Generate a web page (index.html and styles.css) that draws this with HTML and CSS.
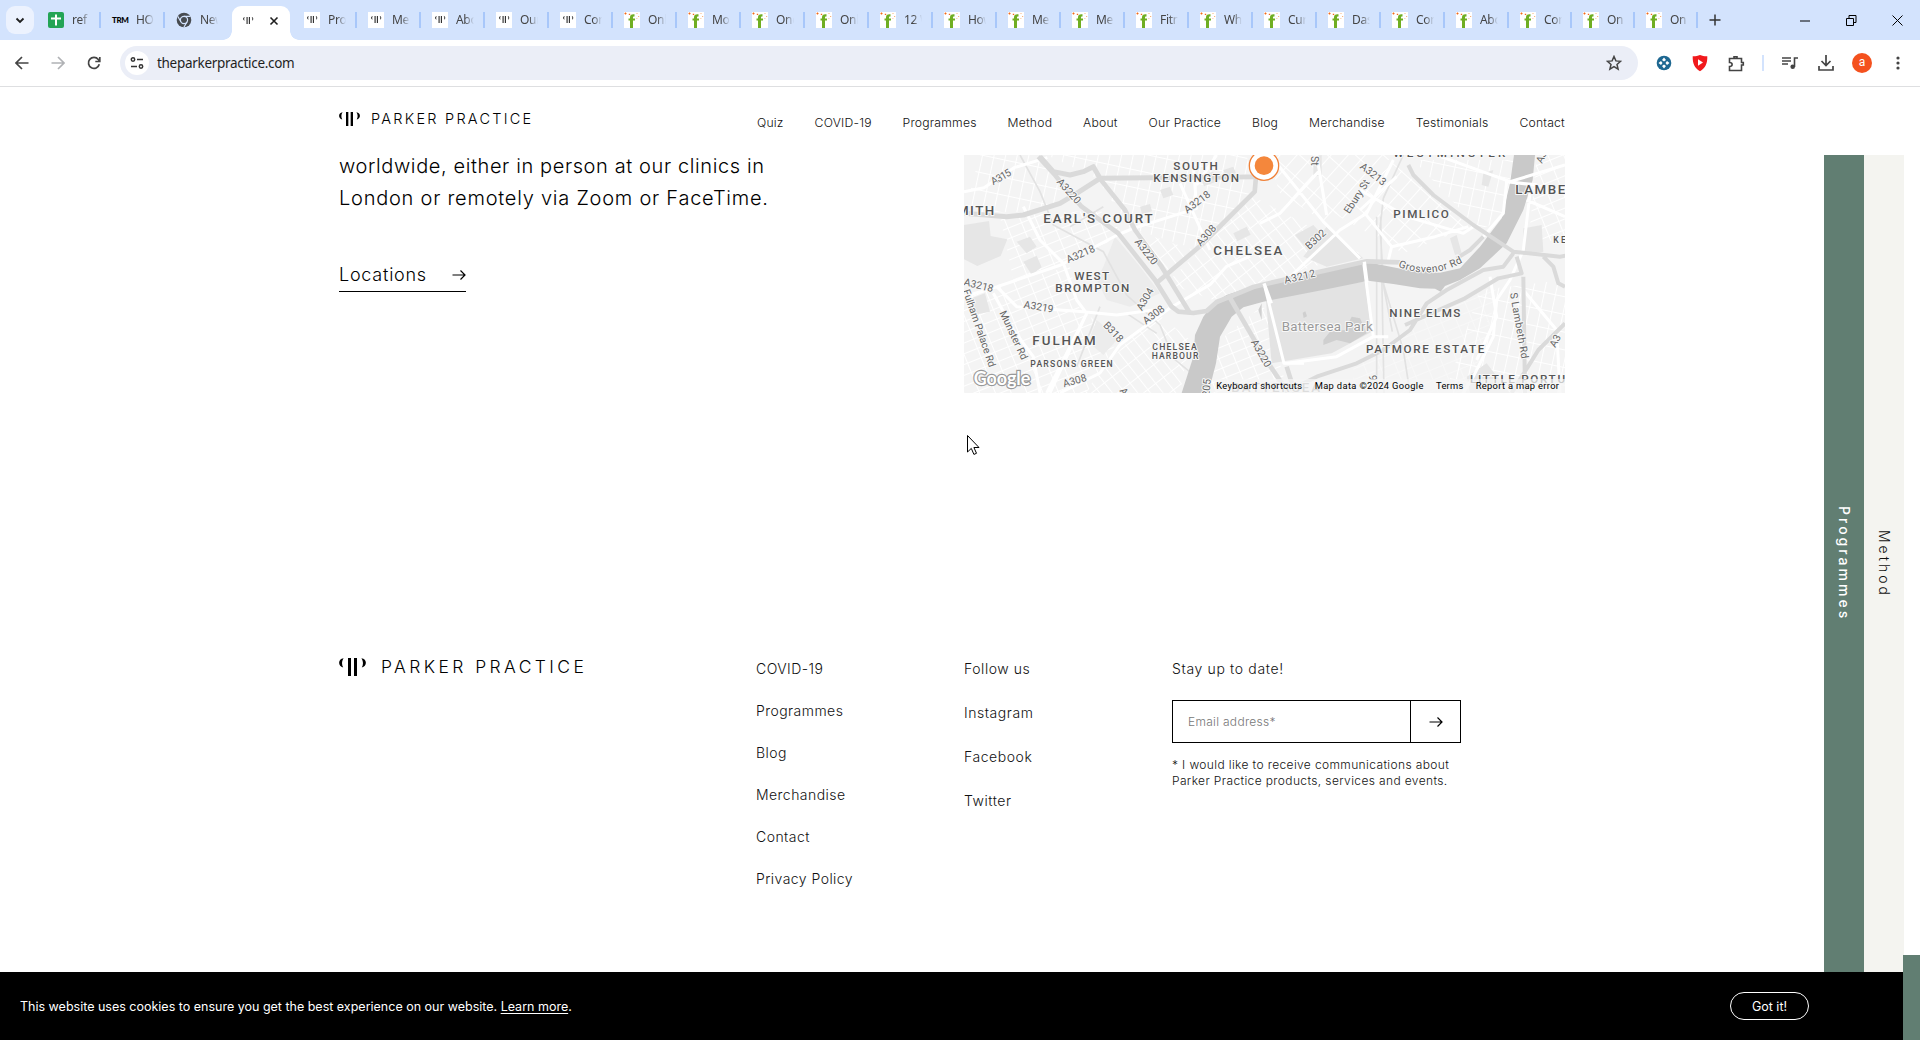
FILE: index.html
```html
<!DOCTYPE html>
<html lang="en">
<head>
<meta charset="utf-8">
<title>Parker Practice</title>
<link rel="stylesheet" href="styles.css">
</head>
<body>
<svg class="defs" aria-hidden="true">
  <symbol id="pp" viewBox="0 0 27 18"><path d="M4.6.2C-1.300 1-1.300 8 4.200 9.600 2.500 6.500 2.700 3 4.600.2zM22.400.2C28.300 1 28.300 8 22.800 9.600 24.500 6.500 24.300 3 22.400.2zM9 0h3v18H9zM15 0h3v18h-3z"/></symbol>
  <symbol id="fav-pp" viewBox="0 0 16 16"><rect width="16" height="16" fill="#fff"/><use href="#pp" x="3" y="4" width="10.500" height="7" fill="#333"/></symbol>
  <symbol id="fav-f" viewBox="0 0 16 16"><rect width="16" height="16" fill="#fff"/><path d="M6 16V8.600H4.500V6.400H6V5.300C6 3 7.400 2 10.500 2.300v2.200C9.300 4.300 9 4.700 9 5.600v.8h2v2.200H9V16z" fill="#6fae22"/><path d="M.5 1.500h2M1.500.5v2M4.800 2.300h1.400" stroke="#f26a1b" stroke-width="1.200"/><path d="M12.500 1.500h1M14 4.500h1.200M12.500 6.500h.8" stroke="#f9b27c"/></symbol>
  <symbol id="arrow" viewBox="0 0 14 12"><path d="M.5 6H13M8.500 1.500L13 6l-4.500 4.500" fill="none" stroke="#000" stroke-width="1.200"/></symbol>
</svg>

<div class="tabs">
  <div class="tab-search"><svg width="10" height="10" viewBox="0 0 10 10"><path d="M1.500 3.500L5 7l3.500-3.500" fill="none" stroke="#1f1f1f" stroke-width="1.800"/></svg></div>
  <div class="tab"><svg class="fav" viewBox="0 0 16 16"><rect width="16" height="16" rx="2" fill="#23a455"/><path d="M8 2.500v11M3 6.500h10" stroke="#fff" stroke-width="2"/></svg><span>ref</span></div>
  <div class="tab"><b class="fav trm">TRM</b><span>HO</span></div>
  <div class="tab last-before"><svg class="fav" viewBox="0 0 16 16"><circle cx="8" cy="8" r="7.300" fill="#474b50"/><circle cx="8" cy="8" r="3.600" fill="#474b50" stroke="#d3e3fd" stroke-width="1.200"/><path d="M8 4.400h6.500M4.900 9.800L1.700 4.200M11.100 9.800l-3.200 5.500" stroke="#d3e3fd" stroke-width="1.200"/></svg><span>New</span></div>
  <div class="tab active"><svg class="fav"><use href="#fav-pp"/></svg><svg class="close" width="10" height="10" viewBox="0 0 10 10"><path d="M1.500 1.500l7 7M8.500 1.500l-7 7" stroke="#1f1f1f" stroke-width="1.600"/></svg></div>
  <div class="tab"><svg class="fav"><use href="#fav-pp"/></svg><span>Pro</span></div>
  <div class="tab"><svg class="fav"><use href="#fav-pp"/></svg><span>Me</span></div>
  <div class="tab"><svg class="fav"><use href="#fav-pp"/></svg><span>Abo</span></div>
  <div class="tab"><svg class="fav"><use href="#fav-pp"/></svg><span>Our</span></div>
  <div class="tab"><svg class="fav"><use href="#fav-pp"/></svg><span>Con</span></div>
  <div class="tab"><svg class="fav"><use href="#fav-f"/></svg><span>Onl</span></div>
  <div class="tab"><svg class="fav"><use href="#fav-f"/></svg><span>Mo</span></div>
  <div class="tab"><svg class="fav"><use href="#fav-f"/></svg><span>One</span></div>
  <div class="tab"><svg class="fav"><use href="#fav-f"/></svg><span>Onl</span></div>
  <div class="tab"><svg class="fav"><use href="#fav-f"/></svg><span>12 W</span></div>
  <div class="tab"><svg class="fav"><use href="#fav-f"/></svg><span>How</span></div>
  <div class="tab"><svg class="fav"><use href="#fav-f"/></svg><span>Me</span></div>
  <div class="tab"><svg class="fav"><use href="#fav-f"/></svg><span>Me</span></div>
  <div class="tab"><svg class="fav"><use href="#fav-f"/></svg><span>Fitn</span></div>
  <div class="tab"><svg class="fav"><use href="#fav-f"/></svg><span>Wh</span></div>
  <div class="tab"><svg class="fav"><use href="#fav-f"/></svg><span>Cur</span></div>
  <div class="tab"><svg class="fav"><use href="#fav-f"/></svg><span>Das</span></div>
  <div class="tab"><svg class="fav"><use href="#fav-f"/></svg><span>Con</span></div>
  <div class="tab"><svg class="fav"><use href="#fav-f"/></svg><span>Abo</span></div>
  <div class="tab narrow"><svg class="fav"><use href="#fav-f"/></svg><span>Con</span></div>
  <div class="tab narrow"><svg class="fav"><use href="#fav-f"/></svg><span>On</span></div>
  <div class="tab narrow"><svg class="fav"><use href="#fav-f"/></svg><span>On</span></div>
  <svg class="plus" width="12" height="12" viewBox="0 0 12 12"><path d="M6 .5v11M.5 6h11" stroke="#333" stroke-width="1.500"/></svg>
  <div class="window-buttons">
    <svg width="11" height="11" viewBox="0 0 11 11"><path d="M0 6h10" stroke="#000"/></svg>
    <svg width="11" height="11" viewBox="0 0 11 11"><path d="M.5 3.500h7v7h-7zM3 3.500V.5h7v7H7.500" fill="none" stroke="#000"/></svg>
    <svg width="11" height="11" viewBox="0 0 11 11"><path d="M.5.5l10 10M10.500.5l-10 10" stroke="#000"/></svg>
  </div>
</div>

<div class="toolbar">
  <div class="nav-buttons">
    <svg width="14" height="14" viewBox="0 0 14 14"><path d="M13.500 7H1.500M7 1L1 7l6 6" fill="none" stroke="#444" stroke-width="1.700"/></svg>
    <svg width="14" height="14" viewBox="0 0 14 14"><path d="M.5 7h12M7 1l6 6-6 6" fill="none" stroke="#b0b2b5" stroke-width="1.700"/></svg>
    <svg width="14" height="14" viewBox="0 0 14 14"><path d="M12.300 8.300A5.500 5.500 0 1 1 11.300 3.500L12.500 5M12.800 1v4.500H8.300" fill="none" stroke="#444" stroke-width="1.700"/></svg>
  </div>
  <div class="omnibox">
    <div class="site-info"><svg width="14" height="12" viewBox="0 0 14 12"><path d="M7 2.500h6M1 9.500h6" stroke="#333" stroke-width="1.600"/><circle cx="3" cy="2.500" r="1.700" fill="none" stroke="#333" stroke-width="1.500"/><circle cx="11" cy="9.500" r="1.700" fill="none" stroke="#333" stroke-width="1.500"/></svg></div>
    <span class="url">theparkerpractice.com</span>
    <svg class="star" width="16" height="16" viewBox="0 0 16 16"><path d="M8 1.500l1.900 4.400 4.700.4-3.600 3.100 1.100 4.700L8 11.600l-4.100 2.500L5 9.400 1.400 6.300l4.700-.4z" fill="none" stroke="#444" stroke-width="1.500"/></svg>
  </div>
  <div class="extensions">
    <svg width="16" height="16" viewBox="0 0 16 16"><circle cx="8" cy="8" r="7.300" fill="#1d6791"/><path d="M8 2.500l2 2.500-2 1.500L6 5zM8 13.500L6 11l2-1.500 2 1.500zM2.500 8L5 6l1.500 2L5 10zM13.500 8L11 10 9.500 8 11 6z" fill="#fff"/></svg>
    <svg width="16" height="18" viewBox="0 0 16 18"><path d="M8 1c2.500 1 4.500 1.400 7.300 1.300C15.500 9.500 13.500 14 8 17.200 2.500 14 .5 9.500.7 2.300 3.500 2.400 5.500 2 8 1z" fill="#f11a1d"/><path d="M6 5.300l5 3.200-5 3.200z" fill="#fff"/></svg>
    <svg width="17" height="17" viewBox="0 0 17 17"><path d="M1.500 3.500h12v4h1.800v2.500h-1.800v5.500h-12v-4c3.500 0 3.500-4 0-4zM6 3.500V1.700h3v1.800" fill="none" stroke="#444" stroke-width="1.600"/></svg>
    <i></i>
    <svg width="16" height="14" viewBox="0 0 16 14"><path d="M0 2h9M0 5h9M0 8h6M12.500 11V2H16" fill="none" stroke="#444" stroke-width="1.600"/><circle cx="10.700" cy="10.700" r="2.300" fill="#444"/></svg>
    <svg width="16" height="16" viewBox="0 0 16 16"><path d="M8 0v10M3.500 6L8 10.500 12.500 6M1 11v4h14v-4" fill="none" stroke="#444" stroke-width="1.700"/></svg>
    <div class="avatar">a</div>
    <svg width="4" height="16" viewBox="0 0 4 16" fill="#444"><circle cx="2" cy="3" r="1.600"/><circle cx="2" cy="8" r="1.600"/><circle cx="2" cy="13" r="1.600"/></svg>
  </div>
</div>

<div class="page">
  <div class="main">
    <header class="site-header">
      <a class="logo"><svg width="21" height="14"><use href="#pp"/></svg><span>PARKER PRACTICE</span></a>
      <nav>
        <a>Quiz</a><a>COVID-19</a><a>Programmes</a><a>Method</a><a>About</a><a>Our Practice</a><a>Blog</a><a>Merchandise</a><a>Testimonials</a><a>Contact</a>
      </nav>
    </header>

    <div class="body-row">
      <div class="content">
        <section class="clinics">
          <div class="intro">
            <p><span class="first">worldwide, either in person at our clinics in</span><br>London or remotely via Zoom or FaceTime.</p>
            <a class="locations"><span>Locations</span><svg width="14" height="12"><use href="#arrow"/></svg></a>
          </div>
          <svg class="map" width="601" height="238" viewBox="12 15 1803 714">
            <defs>
              <pattern id="g1" width="44" height="30" patternUnits="userSpaceOnUse" patternTransform="rotate(-22)"><path d="M0 0h44M0 0v30" stroke="#fff" stroke-width="6"/></pattern>
              <pattern id="g2" width="34" height="52" patternUnits="userSpaceOnUse" patternTransform="rotate(12)"><path d="M0 0h34M0 0v52" stroke="#fff" stroke-width="6"/></pattern>
              <pattern id="g3" width="38" height="56" patternUnits="userSpaceOnUse" patternTransform="rotate(42)"><path d="M0 0h38M0 0v56" stroke="#fff" stroke-width="6"/></pattern>
              <pattern id="g4" width="30" height="48" patternUnits="userSpaceOnUse" patternTransform="rotate(-38)"><path d="M0 0h30M0 0v48" stroke="#fff" stroke-width="6"/></pattern>
            </defs>
            <rect x="12" y="15" width="1803" height="714" fill="#f4f4f4"/>
            <g>
              <path d="M12 430L330 350 360 480 480 560 380 729H12z" fill="url(#g1)"/>
              <path d="M60 15h170l90 130-100 40L12 190z" fill="url(#g2)"/>
              <path d="M120 200l300-20 60 60-60 60-260 90z" fill="url(#g1)"/>
              <path d="M260 15h600l20 110-180 170-190-60-100-150z" fill="url(#g2)"/>
              <path d="M520 240l180 60-90 90zM620 400l260-260 320 170-280 80-160 60z" fill="url(#g4)"/>
              <path d="M370 729l110-130 110-110 100 80-30 159z" fill="url(#g4)"/>
              <path d="M780 570l130-105 75 264H740z" fill="url(#g1)"/>
              <path d="M920 15h380L1100 220 960 130z" fill="url(#g3)"/>
              <path d="M1120 190l180-150 230 190-200 80z" fill="url(#g3)"/>
              <path d="M1360 30h300l-20 170-80 40z" fill="url(#g2)"/>
              <path d="M1560 420l255-30v339h-360z" fill="url(#g2)"/>
              <path d="M1730 15h85v250l-110 20z" fill="url(#g1)"/>
              <path d="M1180 650l230-160 200-80-60 319h-370z" fill="url(#g1)" opacity=".35"/>
            </g>
            <g fill="#e6e6e6">
              <path d="M12 225l75-12 5 45 50 10-20 50-70 30-40-20zM170 275l40-15 20 30-30 20zM190 335l40-18 15 35-30 22zM35 445l40-15 15 55-50 10z"/>
              <path d="M465 260l75 90 60 80-90 40-70-20-30-60 20-40zM410 510l65 55-45 50-45-40z" fill="#ececec"/>
              <path d="M600 120l30-10 10 25-30 10zM720 75l40-10 8 30-36 14zM540 170l30-8 6 22-30 8zM820 250l40-20 12 24-40 20zM790 60l30-10 8 20-30 10z"/>
              <path d="M1005 255l55-30 50 55-50 40zM1100 230l110 95-110 25-70-30 30-40z"/>
              <path d="M915 420l300-25 20 150-120 65-180 30z" fill="#e3e3e3"/>
              <path d="M1690 235l55-10 5 80-60 10zM1520 680l60-40 70 89h-120zM1470 265l20-10 15 55-20 5zM1570 70l30-10-15 50-20-5zM1060 20l25-5v60l-25 5z"/>
            </g>
            <g fill="#cfcfcf"><path d="M1090 570l20-25 45-5 20-40 25 5 20 45-50 30-40-10-40 15zM1028 488l8-4 5 15-10 5z"/></g>
            <g fill="none" stroke="#e2e2e2" stroke-width="5">
              <path d="M180 15l60 110 40 100 150 80 70 130 100 90 40 100 110 90M1250 200V729M1262 200l10 529M1330 15l-60 130-10 90 12 180 25 130M330 230l100-60M500 490l90 60M1270 400l60 200 20 129M350 650l70-180"/>
            </g>
            <path d="M665 729L700 620 705 555 730 500 760 460 800 435 860 415 912 400 1100 358 1215 335 1330 358 1440 368 1500 355 1560 290 1625 205 1650 100 1662 15h63L1718 90 1690 180 1640 280 1560 355 1500 390 1455 408 1442 425 1425 416 1380 415 1300 402 1225 392 1100 418 910 455 850 472 815 500 780 560 768 640 745 729z" fill="#c9c9c9"/>
            <path d="M895 480l10-20v50z" fill="#cfcfcf"/>
            <g fill="none" stroke="#fff" stroke-width="9" stroke-linejoin="round">
              <path d="M12 125l60-12 90-60 100-30M12 440l100-30 190-65 170-90 60-25M110 410l60 60 200 15 100 10 110-15M190 170l50 100 70 70 40 110 30 40-110 239M100 430l60 110 60 80 20 109M380 490L260 729M300 729l120-60 60-85 150-110 120-70 50-55 70-30M520 235l190-60-10-130M660 100l90 200M770 15l-60 90"/>
              <path d="M930 15l160 200 110 110M1070 15l30 180M1300 30l-80 160-80 50-160 150M1080 60L960 190l-60 30M1200 180l110-100M1200 120l140 80 170 50 30-20M1215 190l80 100 130-30 100-30M1295 290l-10 40M912 400l60 240 60 0M1210 330l30 230h45M980 640l150-20 110-60M1430 15l220 80 165-50M1640 95l-10 95-60 70M1700 150l115 50M1710 130l-20 170-40 90-40 60-10 110-60 120-50 80M1590 380l20 120-60 130M1690 420l100 120 10 189"/>
            </g>
            <g fill="none" stroke="#dadada" stroke-width="14" stroke-linejoin="round">
              <path d="M240 20l40 45 50 10 40-10 30-15 20 35 460-5 55-25M420 85l-70 45-50 30-110 35-50 5L12 190" stroke-width="15"/>
              <path d="M235 20l50 55 20 25 60 70 110 80 110 140 50 80 20 15 45 4 40-6 30-27 50-20 60-25 50-12 290-65 100 3"/>
              <path d="M415 80l80 100 30 60 80 110 85 140M890 60l-6 65-160 160-130 110M805 435l110 190 70 104M980 650l25 79"/>
              <path d="M1345 45l15 30 60 60 120 90 120 80 140 15 115-20M1570 260l-40 40-40 25M1660 310l-30 40-60 10-110 60-60 40-50 80-80 60-80 40-120 40-80 40M1670 320l15 50-70 15-100 60-180 80M1690 380l5 349M1815 520l-80 80-80 129M1750 320l30 30 15 50 20 10" stroke-width="12"/>
            </g>
            <path d="M912 400l22 60M1213 335l8 62M1640 95l90 10" stroke="#fff" stroke-width="10"/>
            <g class="lbl">
              <g font-size="40" font-weight="500">
                <text x="-38" y="194" textLength="141">SMITH</text><text x="250" y="219" textLength="328">EARL'S COURT</text><text x="760" y="315" textLength="207">CHELSEA</text><text x="217" y="585" textLength="190">FULHAM</text><text x="1666" y="132" textLength="212">LAMBETH</text>
              </g>
              <g font-size="35" font-weight="500">
                <text x="640" y="60" textLength="133">SOUTH</text><text x="580" y="96" textLength="257">KENSINGTON</text><text x="343" y="390" textLength="104">WEST</text><text x="286" y="426" textLength="222">BROMPTON</text><text x="1300" y="205" textLength="166">PIMLICO</text><text x="1288" y="501" textLength="213">NINE ELMS</text><text x="1218" y="609" textLength="355">PATMORE ESTATE</text><text x="1300" y="20" textLength="336">WESTMINSTER</text><text x="1530" y="699" textLength="366">LITTLE PORTUGAL</text>
              </g>
              <g font-size="26" font-weight="500">
                <text x="577" y="599" textLength="133">CHELSEA</text><text x="575" y="626" textLength="140">HARBOUR</text><text x="211" y="651" textLength="247">PARSONS GREEN</text><text x="1780" y="278" textLength="88">KENN</text>
              </g>
              <g font-size="31" class="road">
                <text transform="translate(100 106) rotate(-30)" textLength="65">A315</text><text transform="translate(289 97) rotate(48)">A3220</text><text transform="translate(682 191) rotate(-37)">A3218</text><text transform="translate(722 290) rotate(-48)">A308</text><text transform="translate(523 276) rotate(52)">A3220</text><text transform="translate(325 340) rotate(-24)">A3218</text><text transform="translate(10 405) rotate(14)">A3218</text><text transform="translate(190 473) rotate(10)">A3219</text><text transform="translate(546 484) rotate(-60)">A304</text><text transform="translate(558 524) rotate(-37)">A308</text><text transform="translate(428 527) rotate(47)">B318</text><text transform="translate(312 712) rotate(-16)">A308</text><text transform="translate(872 576) rotate(60)">A3220</text><text transform="translate(975 401) rotate(-13)" textLength="95">A3212</text><text transform="translate(1048 300) rotate(-43)">B302</text><text transform="translate(1198 53) rotate(38)">A3213</text><text transform="translate(1168 193) rotate(-57)">Ebury St</text><text transform="translate(1052 18) rotate(90)">St</text><text transform="translate(1746 42) rotate(-65)">A3</text><text transform="translate(1786 594) rotate(-62)">A3</text><text transform="translate(118 488) rotate(65)">Munster Rd</text><text transform="translate(8 422) rotate(71)" textLength="245">Fulham Palace Rd</text><text transform="translate(1650 430) rotate(80)" textLength="200">S Lambeth Rd</text><text transform="translate(1252 692) rotate(-90)">6</text><text transform="translate(748 740) rotate(-85)">205</text><text transform="translate(478 722) rotate(55)">A3</text>
                <path id="gros" d="M1314 350q100 42 204-18" fill="none" stroke="none"/><text><textPath href="#gros" textLength="202">Grosvenor Rd</textPath></text>
              </g>
              <text x="965" y="543" font-size="40" class="park" textLength="273">Battersea Park</text>
              <text x="814" y="727" font-size="40" font-weight="500" class="park" textLength="266">BATTERSEA</text>
            </g>
            <circle cx="912" cy="47" r="44" fill="#fff" stroke="#f08138" stroke-width="4"/><circle cx="912" cy="47" r="28" fill="#f4873c"/>
            <rect x="765" y="687" width="1050" height="42" fill="#f5f5f5" opacity=".72"/>
            <text x="41" y="704" font-family="Lato" font-weight="700" font-size="54" fill="#fff" stroke="#999" stroke-width="7" paint-order="stroke" textLength="170">Google</text>
            <g font-family="Roboto" font-size="28" font-weight="400" fill="#000"><text x="769" y="717" textLength="257">Keyboard shortcuts</text><text x="1064" y="717" textLength="326">Map data ©2024 Google</text><text x="1428" y="717" textLength="82">Terms</text><text x="1547" y="717" textLength="250">Report a map error</text></g>
          </svg>
        </section>

        <footer class="site-footer">
          <a class="logo big"><svg width="27" height="18"><use href="#pp"/></svg><span>PARKER PRACTICE</span></a>
          <ul class="links"><li>COVID-19</li><li>Programmes</li><li>Blog</li><li>Merchandise</li><li>Contact</li><li>Privacy Policy</li></ul>
          <ul class="links social"><li>Follow us</li><li>Instagram</li><li>Facebook</li><li>Twitter</li></ul>
          <div class="newsletter">
            <div class="title">Stay up to date!</div>
            <div class="field"><span>Email address*</span><div class="send"><svg width="14" height="12"><use href="#arrow"/></svg></div></div>
            <p>* I would like to receive communications about<br>Parker Practice products, services and events.</p>
          </div>
        </footer>
      </div>
      <aside class="side programmes"><span>Programmes</span></aside>
      <aside class="side method"><span>Method</span></aside>
    </div>

    <div class="cookies">
      <p>This website uses cookies to ensure you get the best experience on our website. <u>Learn more</u>.</p>
      <button>Got it!</button>
    </div>
  </div>
  <div class="scrollbar"><div class="thumb"></div></div>
</div>

<svg class="cursor" width="13" height="21" viewBox="0 0 13 21"><path d="M.5.500V17l3.800-3.600 2.600 6 2.600-1.100-2.600-5.800H12z" fill="#fff" stroke="#000"/></svg>
</body>
</html>
```
FILE: styles.css
```css
* { box-sizing: border-box; }
body { margin: 0; width: 1920px; height: 1040px; overflow: hidden; display: flex; flex-direction: column; background: #fff; color: #111; font-family: Inter, "Liberation Sans", sans-serif; font-weight: 300; }
svg { display: block; flex: none; }
.defs { position: absolute; width: 0; height: 0; }
p, ul { margin: 0; padding: 0; list-style: none; }

/* Browser tab strip */
.tabs { height: 40px; flex: none; display: flex; align-items: center; background: #d3e3fd; font: 400 12px "Noto Sans", sans-serif; color: #444; padding-left: 6px; }
.tab-search { width: 28px; height: 28px; margin-right: 3px; border-radius: 9px; background: #ecf2fe; display: flex; align-items: center; justify-content: center; }
.tab { width: 64px; height: 16px; padding-left: 11px; border-right: 2px solid #a8c7fa; display: flex; align-items: center; gap: 8px; flex: none; }
.tab span { width: 18px; overflow: hidden; white-space: nowrap; letter-spacing: -.3px; line-height: 16px; mask-image: linear-gradient(90deg, #000 50%, transparent); }
.fav { width: 16px; height: 16px; }
.trm { font: 900 8px/16px Lato, sans-serif; color: #000; letter-spacing: -.4px; }
.last-before { border-color: transparent; }
.tab.active { height: 34px; margin: 6px 3px 0 3px; width: 58px; padding: 0 0 4px 8px; border: 0; background: #fff; border-radius: 9px 9px 0 0; gap: 13px; position: relative; }
.active::before, .active::after { content: ""; position: absolute; bottom: 0; width: 9px; height: 9px; }
.active::before { left: -9px; background: radial-gradient(circle at 0 0, transparent 8.5px, #fff 9px); }
.active::after { right: -9px; background: radial-gradient(circle at 100% 0, transparent 8.5px, #fff 9px); }
.narrow { width: 63px; }
.plus { margin-left: 11px; }
.window-buttons { margin-left: auto; padding-right: 17px; display: flex; gap: 35px; }

/* Browser toolbar */
.toolbar { height: 47px; flex: none; display: flex; align-items: center; padding-left: 15px; border-bottom: 1px solid #dedfe1; }
.nav-buttons { display: flex; gap: 22px; width: 105px; }
.omnibox { width: 1518px; height: 34px; border-radius: 17px; background: #ebeef7; display: flex; align-items: center; padding: 0 16px 0 5px; }
.site-info { width: 24px; height: 24px; border-radius: 50%; background: #fff; display: flex; align-items: center; justify-content: center; }
.url { margin-left: 8px; font: 400 13.500px "Noto Sans", sans-serif; color: #1f1f1f; letter-spacing: -.3px; }
.star { margin-left: auto; }
.extensions { display: grid; grid-template-columns: 36px 36px 36px 18px 36px 36px 36px 36px; align-items: center; justify-items: center; margin-left: 8px; }
.extensions i { width: 2px; height: 16px; background: #d3e3fd; }
.avatar { width: 20px; height: 20px; border-radius: 50%; background: #f4511e; color: #fff; font: 400 12px/19px Roboto, sans-serif; text-align: center; }

/* Website */
.page { flex: 1; display: flex; min-height: 0; }
.main { width: 1903px; display: flex; flex-direction: column; }
.scrollbar { flex: 1; display: flex; align-items: flex-end; }
.thumb { width: 100%; height: 85px; background: #617e72; }
.site-header { height: 68px; flex: none; display: flex; justify-content: space-between; padding: 0 338px 0 339px; }
.logo { display: flex; align-items: center; gap: 11px; height: 14px; margin-top: 25px; color: #000; }
.logo span { font-size: 14.500px; letter-spacing: 2.250px; white-space: nowrap; line-height: 14px; }
.site-header nav { width: 808px; display: flex; justify-content: space-between; font-size: 12.200px; line-height: 16px; padding-top: 28px; letter-spacing: .2px; white-space: nowrap; }
.body-row { flex: 1; display: flex; min-height: 0; }
.content { flex: 1; padding-left: 339px; }
.clinics { display: flex; }
.intro { width: 625px; font-size: 20px; letter-spacing: .76px; color: #000; }
.intro .first { letter-spacing: .61px; }
.intro p { margin-top: -5px; line-height: 32px; white-space: nowrap; }
.locations { display: flex; justify-content: space-between; align-items: center; width: 127px; height: 32px; margin-top: 46px; padding-bottom: 2px; border-bottom: 1px solid #000; font-size: 18px; line-height: 28px; }
.map .lbl { font-family: Roboto, sans-serif; fill: #555; stroke: #f8f8f8; stroke-width: 6px; paint-order: stroke; stroke-linejoin: round; font-weight: 400; }
.map .road { fill: #666; }
.map .park { fill: #9a9a9a; }

.site-footer { display: grid; grid-template-columns: 417px 208px 208px 289px; margin-top: 265px; font-size: 14px; line-height: 20px; }
.logo.big { height: 18px; margin: 0; gap: 15px; align-items: center; }
.logo.big span { font-size: 17.500px; letter-spacing: 3.400px; }
.links { display: flex; flex-direction: column; gap: 22px; padding-top: 1px; letter-spacing: .45px; }
.links.social { gap: 24px; letter-spacing: .55px; }
.newsletter { padding-top: 1px; }
.title { letter-spacing: .65px; }
.field { height: 43px; margin-top: 21px; border: 1px solid #000; display: flex; align-items: center; justify-content: space-between; padding-left: 15px; font-size: 12px; letter-spacing: .3px; color: #777; }
.send { width: 50px; height: 41px; border-left: 1px solid #000; display: flex; align-items: center; justify-content: center; }
.newsletter p { margin-top: 14px; font-size: 12px; line-height: 16px; letter-spacing: .37px; white-space: nowrap; }

.side { width: 40px; display: flex; align-items: center; justify-content: center; writing-mode: vertical-rl; font-size: 14px; letter-spacing: 3px; }
.programmes { background: #617e72; color: #fff; font-weight: 500; }
.method { background: #f4f4f0; margin-right: -1px; }
.cookies { height: 68px; flex: none; background: #000; color: #fff; display: flex; align-items: center; justify-content: space-between; padding: 0 94px 0 20px; font-size: 12.500px; font-weight: 400; position: relative; }
.cookies u { text-underline-offset: 2px; }
.cookies button { width: 79px; height: 28px; border: 1px solid #fff; border-radius: 14px; background: none; color: #fff; font: inherit; padding: 0; }
.cursor { position: absolute; left: 967px; top: 435px; }
```
